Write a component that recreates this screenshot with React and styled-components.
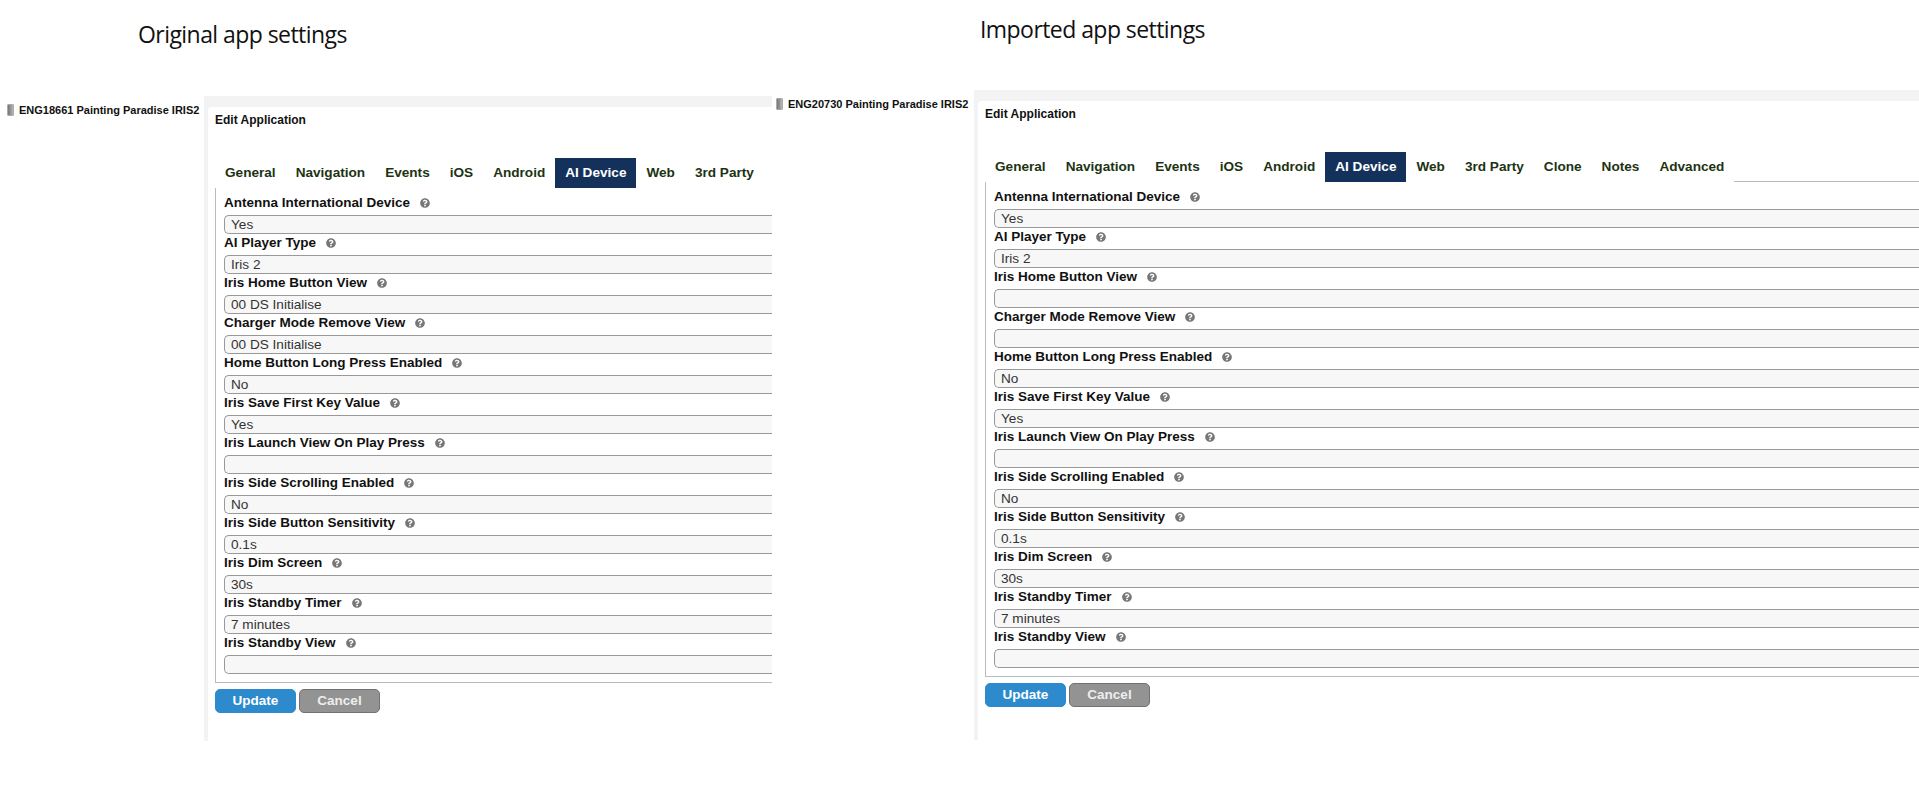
import React from "react";
import styled, { createGlobalStyle } from "styled-components";
import { FaQuestionCircle } from "react-icons/fa";

const Global = createGlobalStyle`
  html, body { margin: 0; padding: 0; background: #fff; overflow: hidden; }
  body { width: 1919px; height: 801px; font-family: "Liberation Sans", Arial, sans-serif; }
`;

const Page = styled.div`
  display: grid;
  grid-template-columns: 772px 1147px;
  width: 1919px;
  height: 801px;
  overflow: hidden;
`;

const Shot = styled.section`
  display: flex;
  flex-direction: column;
  min-width: 0;
  overflow: hidden;
`;

const Heading = styled.h2`
  height: ${(p) => p.$height}px;
  margin: 0;
  padding: ${(p) => p.$top}px 0 0 ${(p) => p.$left}px;
  box-sizing: border-box;
  font-family: "Open Sans", sans-serif;
  font-size: 23px;
  line-height: 30px;
  font-weight: 400;
  letter-spacing: -0.56px;
  color: #111;
`;

const Body = styled.div`
  display: flex;
  height: ${(p) => p.$height}px;
`;

const Sidebar = styled.aside`
  flex: 0 0 ${(p) => p.$width}px;
  display: flex;
  align-items: flex-start;
  gap: 5px;
  padding: 8px 0 0 ${(p) => p.$left}px;
  box-sizing: border-box;
`;

const DeviceIcon = styled.span`
  flex: none;
  width: 7px;
  height: 12px;
  box-sizing: border-box;
  border: 1px solid #aaa;
  border-radius: 1px;
  background: linear-gradient(90deg, #777, #999 60%, #bbb);
`;

const AppName = styled.span`
  font-size: 11px;
  line-height: 13px;
  font-weight: 700;
  color: #111;
  white-space: nowrap;
`;

const Panel = styled.main`
  flex: 1;
  min-width: 0;
  display: flex;
  padding: 11px 0 0 4px;
  background: #f3f3f3;
  overflow: hidden;
`;

const PanelInner = styled.div`
  flex: 1;
  min-width: 0;
  padding: 0 0 0 7px;
  background: #fff;
  border-top-left-radius: 4px;
`;

const PanelTitle = styled.h3`
  margin: 0;
  padding-top: 6px;
  height: 51px;
  box-sizing: border-box;
  font-size: 12px;
  line-height: 14px;
  font-weight: 700;
  color: #111;
`;

const TabBar = styled.nav`
  display: flex;
  height: 30px;
`;

const Tab = styled.span`
  flex: none;
  display: flex;
  align-items: center;
  padding: 0 10px 1px;
  font-size: 13.6px;
  font-weight: 700;
  white-space: nowrap;
  color: ${(p) => (p.$active ? "#fff" : "#1c3312")};
  background: ${(p) => (p.$active ? "#14315c" : "transparent")};
`;

const TabRule = styled.span`
  flex: 1;
  align-self: flex-end;
  border-bottom: 1px solid #bbb;
`;

const Fields = styled.div`
  box-sizing: border-box;
  padding: 6px 0 8px 8px;
  border-left: 1px solid #bbb;
  border-bottom: 1px solid #bbb;
`;

const LabelRow = styled.div`
  display: flex;
  align-items: center;
  gap: 10px;
  height: 21px;
  padding-bottom: 4px;
  box-sizing: border-box;
  font-size: 13.5px;
  font-weight: 700;
  color: #111;
  white-space: nowrap;
`;

const HelpIcon = styled(FaQuestionCircle)`
  flex: none;
  width: 10px;
  height: 10px;
  color: #777;
`;

const Value = styled.div`
  box-sizing: border-box;
  height: 19px;
  padding-left: 6px;
  border: 1px solid #999;
  border-right: none;
  border-radius: 5px 0 0 5px;
  background: #f7f7f7;
  font-size: 13.6px;
  line-height: 17px;
  color: #333;
`;

const Actions = styled.div`
  display: flex;
  gap: 3px;
  margin-top: 6px;
`;

const Button = styled.button`
  width: 81px;
  height: 24px;
  padding: 0 0 1px;
  box-sizing: border-box;
  border: 1px solid ${(p) => (p.$primary ? "#2d8bcd" : "#727272")};
  border-radius: 5px;
  background: ${(p) => (p.$primary ? "#2d8bcd" : "#939393")};
  color: ${(p) => (p.$primary ? "#fff" : "#eee")};
  font-family: "Liberation Sans", Arial, sans-serif;
  font-size: 13.5px;
  font-weight: 700;
`;

const baseTabs = ["General", "Navigation", "Events", "iOS", "Android", "AI Device", "Web", "3rd Party"];

const fieldNames = [
  "Antenna International Device",
  "AI Player Type",
  "Iris Home Button View",
  "Charger Mode Remove View",
  "Home Button Long Press Enabled",
  "Iris Save First Key Value",
  "Iris Launch View On Play Press",
  "Iris Side Scrolling Enabled",
  "Iris Side Button Sensitivity",
  "Iris Dim Screen",
  "Iris Standby Timer",
  "Iris Standby View",
];

const originalValues = ["Yes", "Iris 2", "00 DS Initialise", "00 DS Initialise", "No", "Yes", "", "No", "0.1s", "30s", "7 minutes", ""];
const importedValues = ["Yes", "Iris 2", "", "", "No", "Yes", "", "No", "0.1s", "30s", "7 minutes", ""];

function Settings({ title, headingHeight, headingTop, headingLeft, bodyHeight, sideWidth, sideLeft, appName, tabs, values, rule }) {
  return (
    <Shot>
      <Heading $height={headingHeight} $top={headingTop} $left={headingLeft}>{title}</Heading>
      <Body $height={bodyHeight}>
        <Sidebar $width={sideWidth} $left={sideLeft}>
          <DeviceIcon />
          <AppName>{appName}</AppName>
        </Sidebar>
        <Panel>
          <PanelInner>
            <PanelTitle>Edit Application</PanelTitle>
            <TabBar>
              {tabs.map((t) => (
                <Tab key={t} $active={t === "AI Device"}>{t}</Tab>
              ))}
              {rule && <TabRule />}
            </TabBar>
            <Fields>
              {fieldNames.map((name, i) => (
                <React.Fragment key={name}>
                  <LabelRow>
                    {name}
                    <HelpIcon />
                  </LabelRow>
                  <Value>{values[i]}</Value>
                </React.Fragment>
              ))}
            </Fields>
            <Actions>
              <Button $primary>Update</Button>
              <Button>Cancel</Button>
            </Actions>
          </PanelInner>
        </Panel>
      </Body>
    </Shot>
  );
}

export default function App() {
  return (
    <Page>
      <Global />
      <Settings
        title="Original app settings"
        headingHeight={96}
        headingTop={19}
        headingLeft={138}
        bodyHeight={645}
        sideWidth={204}
        sideLeft={7}
        appName="ENG18661 Painting Paradise IRIS2"
        tabs={baseTabs}
        values={originalValues}
      />
      <Settings
        title="Imported app settings"
        headingHeight={90}
        headingTop={14}
        headingLeft={208}
        bodyHeight={650}
        sideWidth={202}
        sideLeft={4}
        appName="ENG20730 Painting Paradise IRIS2"
        tabs={[...baseTabs, "Clone", "Notes", "Advanced"]}
        values={importedValues}
        rule
      />
    </Page>
  );
}
